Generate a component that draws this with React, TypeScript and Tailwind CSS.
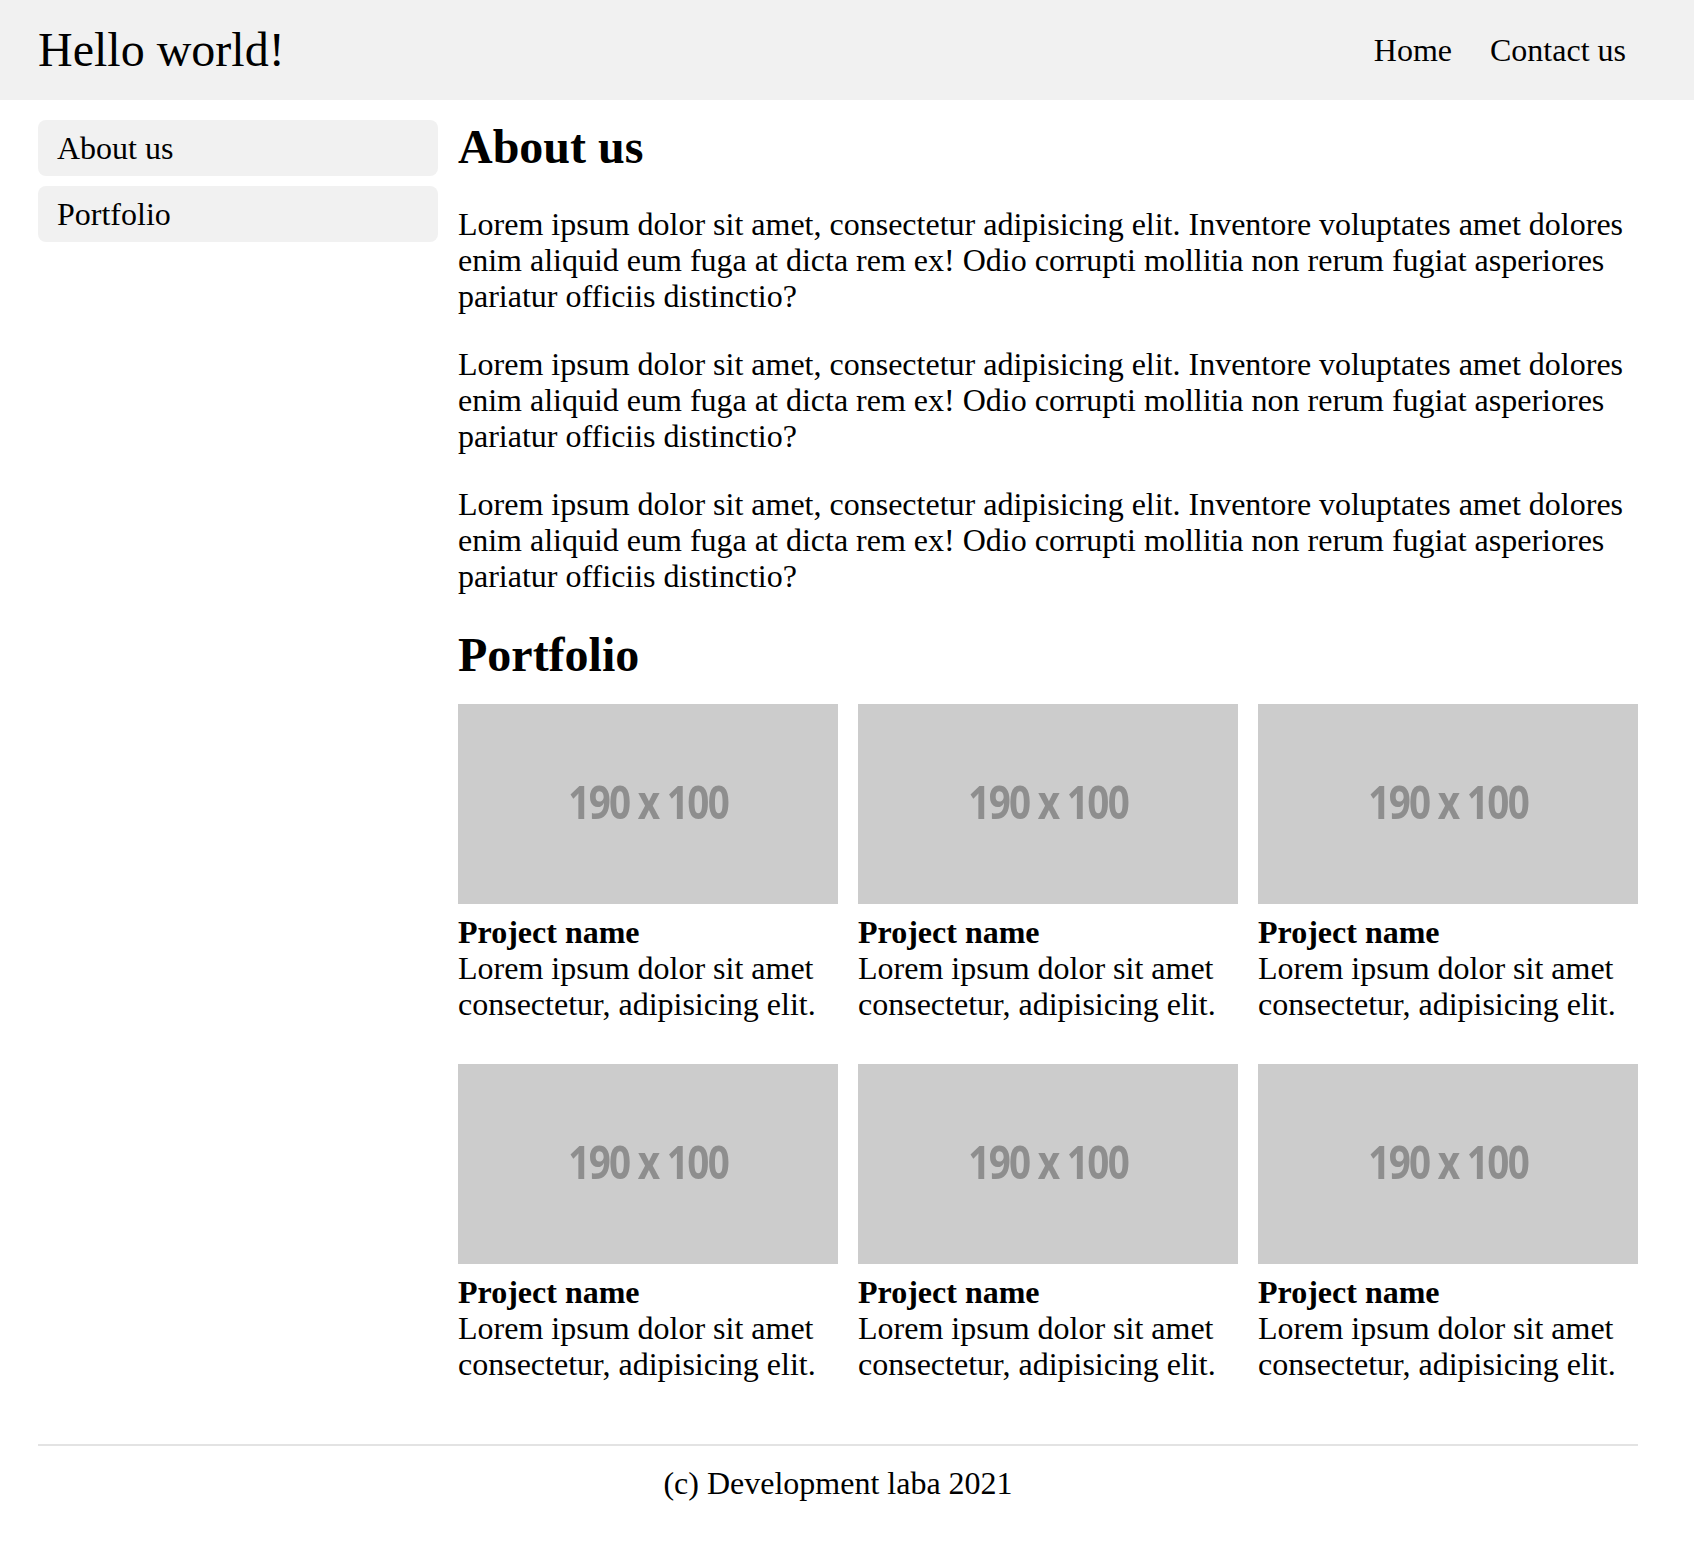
import React from "react";

const LOREM =
  "Lorem ipsum dolor sit amet, consectetur adipisicing elit. Inventore voluptates amet dolores enim aliquid eum fuga at dicta rem ex! Odio corrupti mollitia non rerum fugiat asperiores pariatur officiis distinctio?";

const PROJECTS = [1, 2, 3, 4, 5, 6];

function Placeholder() {
  return (
    <div className="flex h-[200px] w-[380px] items-center justify-center bg-[#cccccc] pb-[6px]">
      <span className="inline-block scale-x-[0.84] font-['Open_Sans',sans-serif] text-[46px] font-bold tracking-[-2px] text-[#8e8e8e] blur-[0.7px]">
        190 x 100
      </span>
    </div>
  );
}

function ProjectCard() {
  return (
    <div className="flex flex-col">
      <Placeholder />
      <div className="mt-[10px] font-bold leading-[36px]">Project name</div>
      <div className="leading-[36px]">
        Lorem ipsum dolor sit amet consectetur, adipisicing elit.
      </div>
    </div>
  );
}

export default function App() {
  return (
    <div className="min-h-[1544px] bg-white font-['Liberation_Serif','Times_New_Roman',serif] text-[32px] text-black">
      <header className="h-[100px] bg-[#f1f1f1]">
        <div className="ml-[38px] flex h-full w-[1600px] items-center justify-between">
          <div className="text-[48px] leading-[54px]">Hello world!</div>
          <nav className="flex gap-[38px] pr-[12px] leading-[36px]">
            <a href="#">Home</a>
            <a href="#">Contact us</a>
          </nav>
        </div>
      </header>

      <div className="ml-[38px] w-[1600px]">
        <div className="mt-[20px] flex gap-[20px]">
          <aside className="flex w-[400px] shrink-0 flex-col gap-[10px]">
            <a href="#about" className="block rounded-[8px] bg-[#f1f1f1] px-[19px] py-[10px] leading-[36px]">
              About us
            </a>
            <a href="#portfolio" className="block rounded-[8px] bg-[#f1f1f1] px-[19px] py-[10px] leading-[36px]">
              Portfolio
            </a>
          </aside>

          <main className="w-[1180px]">
            <h2 id="about" className="text-[48px] font-bold leading-[54px]">About us</h2>
            <p className="mt-[32px] leading-[36px]">{LOREM}</p>
            <p className="mt-[32px] leading-[36px]">{LOREM}</p>
            <p className="mt-[32px] leading-[36px]">{LOREM}</p>

            <h2 id="portfolio" className="mt-[34px] text-[48px] font-bold leading-[54px]">Portfolio</h2>
            <div className="mt-[22px] grid grid-cols-3 gap-x-[20px] gap-y-[42px]">
              {PROJECTS.map((p) => (
                <ProjectCard key={p} />
              ))}
            </div>
          </main>
        </div>

        <footer className="mt-[62px] border-t-2 border-[#e3e3e3] pt-[19px] text-center leading-[36px]">
          (c) Development laba 2021
        </footer>
      </div>
    </div>
  );
}
